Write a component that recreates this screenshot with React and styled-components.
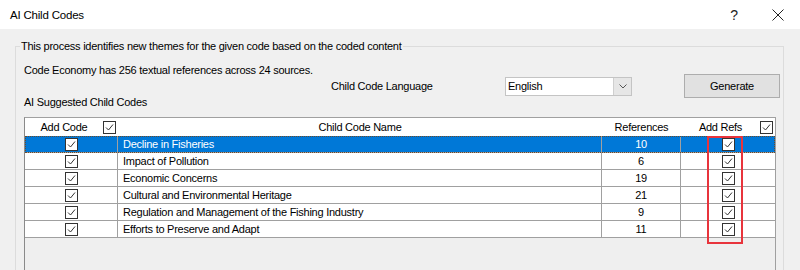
import React from "react";
import styled, { createGlobalStyle } from "styled-components";

const Global = createGlobalStyle`
  html, body { margin: 0; padding: 0; height: 270px; overflow: hidden; }
  body { background: #f0f0f0; font-family: "Liberation Sans", Arial, sans-serif; font-size: 11px; letter-spacing: -0.25px; color: #000; }
  #root { height: 270px; }
`;

const Window = styled.div`
  width: 800px;
  height: 270px;
  display: flex;
  flex-direction: column;
  overflow: hidden;
  background: #f0f0f0;
`;

const TitleBar = styled.div`
  height: 29px;
  flex: none;
  background: #fff;
  display: flex;
  align-items: center;
  padding-left: 10px;
  font-size: 11.5px;
  letter-spacing: -0.2px;
`;

const Title = styled.div`
  flex: 1;
`;

const TitleButton = styled.div`
  width: 44px;
  display: flex;
  align-items: center;
  justify-content: center;
  font-size: 14px;
  color: #222;
`;

const Group = styled.fieldset`
  margin: 9px 0 0 15px;
  width: 756px;
  padding: 8px 3px 0 8px;
  border: 1px solid #dcdcdc;
  min-width: 0;
`;

const Legend = styled.legend`
  padding: 0 1px;
  margin-left: -4px;
  line-height: 16px;
`;

const Line = styled.div`
  line-height: 16px;
  white-space: nowrap;
`;

const TopArea = styled.div`
  display: flex;
  align-items: flex-start;
`;

const LeftInfo = styled.div`
  width: 307px;
  display: flex;
  flex-direction: column;
  gap: 16px;
`;

const Controls = styled.div`
  margin-top: 12px;
  display: flex;
  align-items: center;
`;

const Label = styled.div`
  width: 174px;
  white-space: nowrap;
`;

const Combo = styled.div`
  width: 125px;
  height: 17px;
  border: 1px solid #c4c4c4;
  background: #fff;
  display: flex;
  align-items: stretch;
  margin-right: 52px;
`;

const ComboText = styled.div`
  flex: 1;
  padding-left: 2px;
  display: flex;
  align-items: center;
`;

const ComboArrow = styled.div`
  width: 17px;
  background: #e6e6e6;
  border-left: 1px solid #cfcfcf;
  display: flex;
  align-items: center;
  justify-content: center;
`;

const Button = styled.div`
  width: 94px;
  height: 22px;
  border: 1px solid #adadad;
  background: #e1e1e1;
  display: flex;
  align-items: center;
  justify-content: center;
`;

const Grid = styled.div`
  position: relative;
  margin-top: 7px;
  width: 750px;
  height: 170px;
  border: 1px solid #a0a0a0;
  border-left-color: #8a8a8a;
  background: #efefef;
`;

const HeaderRow = styled.div`
  height: 18px;
  background: #fff;
  display: grid;
  grid-template-columns: 93px 484px 79px 94px;
`;

const HeaderCell = styled.div`
  display: grid;
  grid-template-columns: ${(p) => (p.$check ? "1fr 13px" : "1fr")};
  padding-right: ${(p) => (p.$check ? "2px" : "0")};
  align-items: center;
  justify-items: center;
  white-space: nowrap;
`;

const Row = styled.div`
  height: 16px;
  display: grid;
  grid-template-columns: 93px 484px 79px 94px;
  border-bottom: 1px solid #a0a0a0;
  background: ${(p) => (p.$selected ? "#0078d7" : "#fff")};
  color: ${(p) => (p.$selected ? "#fff" : "#000")};
  outline: ${(p) => (p.$selected ? "1px dotted #6b4a2a" : "none")};
  outline-offset: -1px;
`;

const Cell = styled.div`
  display: flex;
  align-items: center;
  justify-content: ${(p) => (p.$align === "left" ? "flex-start" : "center")};
  padding-left: ${(p) => (p.$align === "left" ? "5px" : "0")};
  border-right: ${(p) => (p.$last ? "none" : "1px solid #a0a0a0")};
  white-space: nowrap;
  overflow: hidden;
`;

const Box = styled.div`
  width: 11px;
  height: 11px;
  border: 1px solid #333;
  background: #fff;
  display: flex;
  align-items: center;
  justify-content: center;
`;

const Highlight = styled.div`
  position: absolute;
  left: 682px;
  top: 18px;
  width: 32px;
  height: 104px;
  border: 2px solid #e8343c;
  pointer-events: none;
`;

const Check = () => (
  <Box>
    <svg width="11" height="11" viewBox="0 0 11 11">
      <polyline points="2,5.5 4.5,8 9,2.5" fill="none" stroke="#333" strokeWidth="1" />
    </svg>
  </Box>
);

const rows = [
  ["Decline in Fisheries", 10],
  ["Impact of Pollution", 6],
  ["Economic Concerns", 19],
  ["Cultural and Environmental Heritage", 21],
  ["Regulation and Management of the Fishing Industry", 9],
  ["Efforts to Preserve and Adapt", 11],
];

export default function App() {
  return (
    <Window>
      <Global />
      <TitleBar>
        <Title>AI Child Codes</Title>
        <TitleButton>?</TitleButton>
        <TitleButton>
          <svg width="12" height="12" viewBox="0 0 12 12">
            <path d="M0.5 0.5 L11.5 11.5 M11.5 0.5 L0.5 11.5" stroke="#222" strokeWidth="1" />
          </svg>
        </TitleButton>
      </TitleBar>
      <Group>
        <Legend>This process identifies new themes for the given code based on the coded content</Legend>
        <TopArea>
          <LeftInfo>
            <Line>Code Economy has 256 textual references across 24 sources.</Line>
            <Line>AI Suggested Child Codes</Line>
          </LeftInfo>
          <Controls>
            <Label>Child Code Language</Label>
            <Combo>
              <ComboText>English</ComboText>
              <ComboArrow>
                <svg width="8" height="5" viewBox="0 0 8 5">
                  <polyline points="0.5,0.5 4,4 7.5,0.5" fill="none" stroke="#555" strokeWidth="1" />
                </svg>
              </ComboArrow>
            </Combo>
            <Button>Generate</Button>
          </Controls>
        </TopArea>
        <Grid>
          <HeaderRow>
            <HeaderCell $check>
              <span>Add Code</span>
              <Check />
            </HeaderCell>
            <HeaderCell>Child Code Name</HeaderCell>
            <HeaderCell>References</HeaderCell>
            <HeaderCell $check>
              <span>Add Refs</span>
              <Check />
            </HeaderCell>
          </HeaderRow>
          {rows.map(([name, refs], i) => (
            <Row key={name} $selected={i === 0}>
              <Cell><Check /></Cell>
              <Cell $align="left">{name}</Cell>
              <Cell>{refs}</Cell>
              <Cell $last><Check /></Cell>
            </Row>
          ))}
          <Highlight />
        </Grid>
      </Group>
    </Window>
  );
}
